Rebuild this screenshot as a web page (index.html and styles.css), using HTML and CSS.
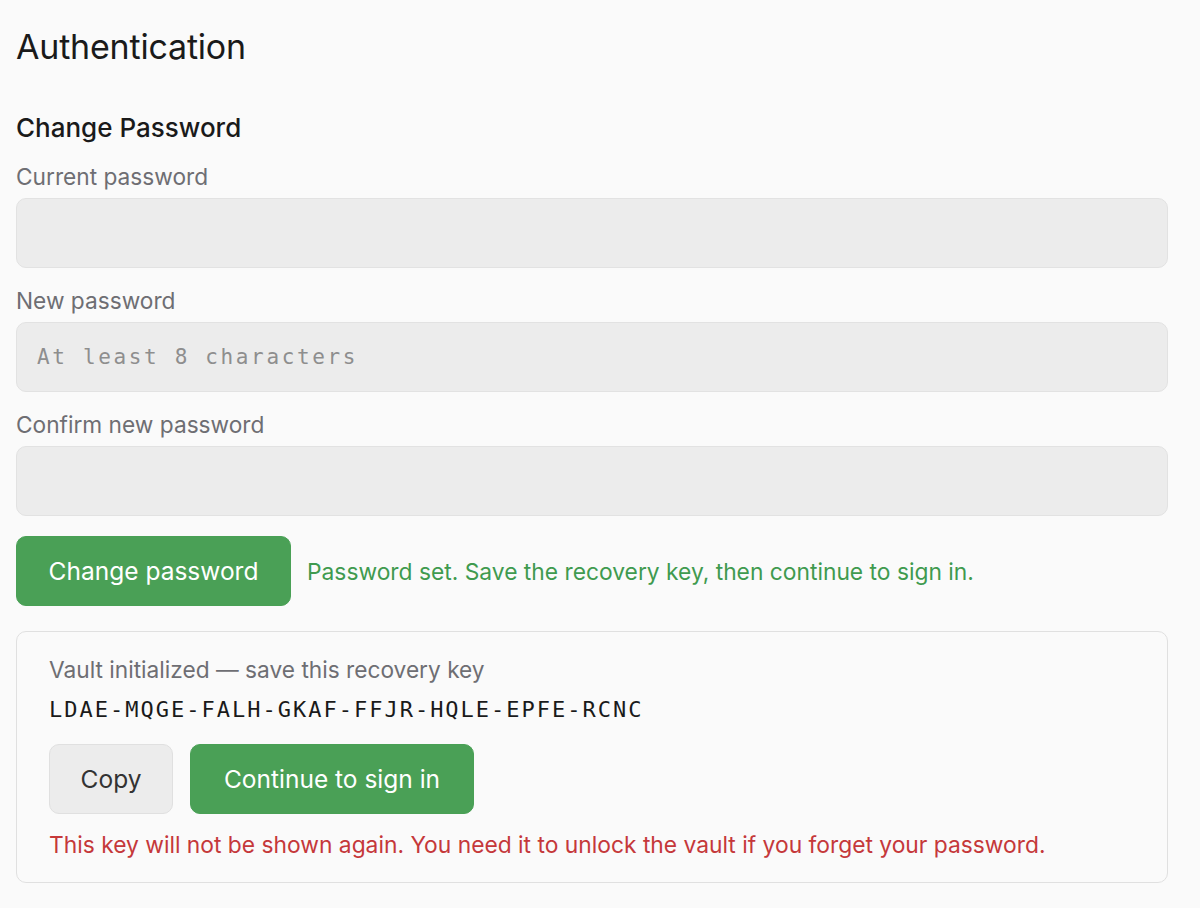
FILE: index.html
```html
<!DOCTYPE html>
<html lang="en">
<head>
<meta charset="utf-8">
<title>Authentication</title>
<link rel="stylesheet" href="styles.css">
</head>
<body>
<main class="page">
  <h1 class="title">Authentication</h1>
  <h2 class="subtitle">Change Password</h2>
  <div class="field">
    <label class="label" for="cur">Current password</label>
    <input class="input" id="cur" type="password">
  </div>
  <div class="field">
    <label class="label" for="new">New password</label>
    <input class="input" id="new" type="password" placeholder="At least 8 characters">
  </div>
  <div class="field">
    <label class="label" for="conf">Confirm new password</label>
    <input class="input" id="conf" type="password">
  </div>
  <div class="actions">
    <button class="btn btn-primary btn-change">Change password</button>
    <span class="success">Password set. Save the recovery key, then continue to sign in.</span>
  </div>
  <section class="card">
    <div class="card-label">Vault initialized — save this recovery key</div>
    <div class="key">LDAE-MQGE-FALH-GKAF-FFJR-HQLE-EPFE-RCNC</div>
    <div class="card-actions">
      <button class="btn btn-secondary btn-copy">Copy</button>
      <button class="btn btn-primary btn-continue">Continue to sign in</button>
    </div>
    <p class="warning">This key will not be shown again. You need it to unlock the vault if you forget your password.</p>
  </section>
</main>
</body>
</html>
```
FILE: styles.css
```css
html, body {
  margin: 0;
  padding: 0;
  background: #fafafa;
}
body {
  font-family: Inter, "Noto Sans", "Liberation Sans", sans-serif;
  color: #1d1d1f;
}
.page {
  width: 1152px;
  padding: 28px 16px 0 16px;
  display: flex;
  flex-direction: column;
}
.title {
  margin: 0;
  font-size: 34px;
  line-height: 38px;
  font-weight: 400;
  color: #1a1a1a;
  letter-spacing: -0.2px;
}
.subtitle {
  margin: 47px 0 0 0;
  font-size: 26px;
  line-height: 30px;
  font-weight: 500;
  color: #1a1a1a;
}
.field {
  display: flex;
  flex-direction: column;
  gap: 8px;
  margin-top: 20px;
}
.subtitle + .field {
  margin-top: 21px;
}
.label {
  font-size: 22.7px;
  line-height: 26px;
  color: #6e6e73;
}
.input {
  box-sizing: border-box;
  height: 70px;
  width: 100%;
  margin: 0;
  padding: 0 20px;
  background: #ececec;
  border: 1px solid #e2e2e2;
  border-radius: 10px;
  font-family: "DejaVu Sans Mono", "Liberation Mono", monospace;
  font-size: 21px;
  letter-spacing: 2.65px;
  outline: none;
}
.input::placeholder {
  color: #8e8e8e;
}
.actions {
  display: flex;
  align-items: center;
  gap: 16px;
  margin-top: 20px;
}
.btn {
  box-sizing: border-box;
  height: 70px;
  border-radius: 10px;
  font-family: Inter, "Noto Sans", "Liberation Sans", sans-serif;
  font-size: 24.5px;
  padding: 0;
  cursor: pointer;
}
.btn-primary {
  background: #4aa056;
  border: 1px solid #49a055;
  color: #ffffff;
}
.btn-secondary {
  background: #ececec;
  border: 1px solid #e0e0e0;
  color: #333333;
}
.btn-change {
  width: 275px;
}
.success {
  font-size: 22.8px;
  color: #3f9a4f;
}
.card {
  margin-top: 25px;
  border: 1px solid #e0e0e0;
  border-radius: 10px;
  padding: 25px 32px 24px 32px;
  display: flex;
  flex-direction: column;
}
.card-label {
  font-size: 22.7px;
  line-height: 26px;
  color: #6e6e73;
}
.key {
  margin-top: 13px;
  font-family: "DejaVu Sans Mono", "Liberation Mono", monospace;
  font-size: 22px;
  line-height: 28px;
  letter-spacing: 2px;
  color: #1a1a1a;
}
.card-actions {
  display: flex;
  gap: 17px;
  margin-top: 20px;
}
.btn-copy {
  width: 124px;
}
.btn-continue {
  width: 284px;
}
.warning {
  margin: 18px 0 0 0;
  font-size: 22.8px;
  line-height: 26px;
  color: #c5383a;
}
```
